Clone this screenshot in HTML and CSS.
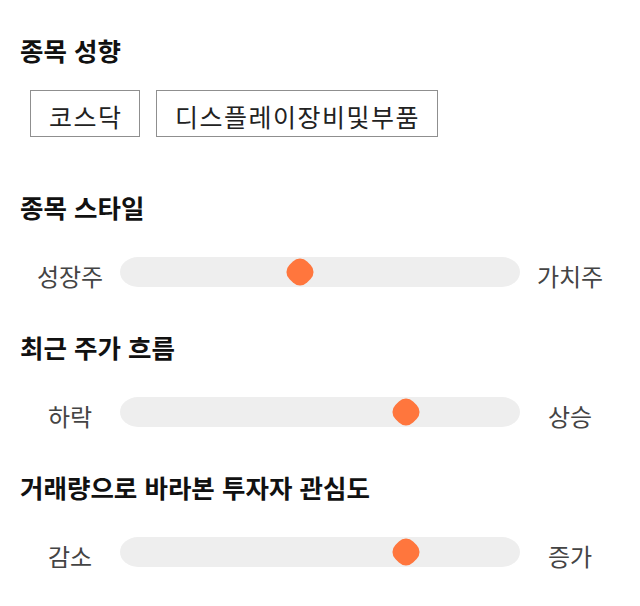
FILE: index.html
```html
<!DOCTYPE html>
<html lang="ko">
<head>
	<meta charset="utf-8" />
	<title>종목 성향</title>
	<link rel="stylesheet" href="styles.css">
</head>
<body>
	<div class="page">
		<div class="section first">
			<h2>종목 성향</h2>
			<ul class="chips">
				<li>코스닥</li>
				<li>디스플레이장비및부품</li>
			</ul>
		</div>

		<div class="section">
			<h2>종목 스타일</h2>
			<div class="slider">
				<span class="label">성장주</span>
				<div class="track"><i class="thumb" style="left: 45%"></i></div>
				<span class="label">가치주</span>
			</div>
		</div>

		<div class="section">
			<h2>최근 주가 흐름</h2>
			<div class="slider">
				<span class="label">하락</span>
				<div class="track"><i class="thumb" style="left: 71.5%"></i></div>
				<span class="label">상승</span>
			</div>
		</div>

		<div class="section">
			<h2>거래량으로 바라본 투자자 관심도</h2>
			<div class="slider">
				<span class="label">감소</span>
				<div class="track"><i class="thumb" style="left: 71.5%"></i></div>
				<span class="label">증가</span>
			</div>
		</div>
	</div>
</body>
</html>
```

FILE: styles.css
```css
*{ margin: 0; padding: 0; box-sizing: border-box; }
body{ background: #ffffff; font-family: "Noto Sans CJK KR", "Noto Sans", sans-serif; color: #111111; }
ul,li{ list-style: none; }

.page{ display: flex; flex-direction: column; gap: 40px; padding: 34px 20px 0 20px; }
.section.first{ padding-bottom: 14px; }
.section h2{ font-size: 25.5px; font-weight: 700; line-height: 32px; color: #111111; }

/* 종목 성향 태그 */
.chips{ display: flex; gap: 16px; margin: 24px 0 0 10px; }
.chips li{ padding: 10px 16.5px 5px 18px; line-height: 30px; font-size: 25px; letter-spacing: 1.5px; color: #222222; border: 1px solid #8f8f8f; }

/* 슬라이더 */
.slider{ display: grid; grid-template-columns: 100px 400px 100px; align-items: start; margin-top: 34px; }
.slider .label{ padding-top: 4px; line-height: 30px; font-size: 24px; color: #444444; text-align: center; }
.slider .track{ position: relative; height: 30px; background: #eeeeee; border-radius: 18px / 15px; }
.slider .thumb{ position: absolute; top: 50%; width: 25px; height: 25px; background: #ff763d; border-radius: 10px; transform: translate(-50%, -50%) rotate(45deg); }
```
